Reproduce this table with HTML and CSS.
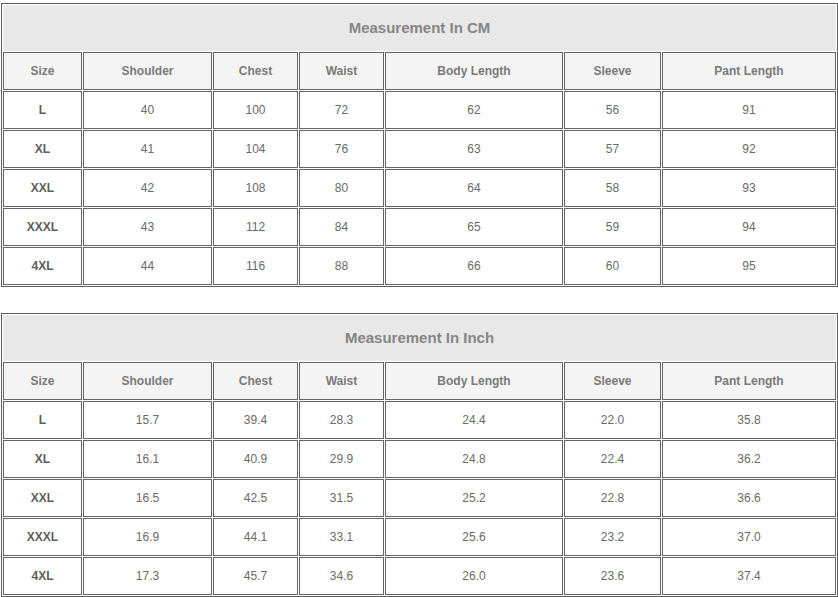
FILE: index.html
```html
<!DOCTYPE html>
<html>
<head>
<meta charset="utf-8">
<link rel="stylesheet" href="styles.css">
</head>
<body>
<div class="page">
<table class="sizes">
  <colgroup>
    <col class="c-size"><col class="c-shoulder"><col class="c-chest"><col class="c-waist"><col class="c-body"><col class="c-sleeve"><col class="c-pant">
  </colgroup>
  <tr><td class="title" colspan="7">Measurement In CM</td></tr>
  <tr class="head"><td>Size</td><td>Shoulder</td><td>Chest</td><td>Waist</td><td>Body Length</td><td>Sleeve</td><td>Pant Length</td></tr>
  <tr><td class="sz">L</td><td>40</td><td>100</td><td>72</td><td>62</td><td>56</td><td>91</td></tr>
  <tr><td class="sz">XL</td><td>41</td><td>104</td><td>76</td><td>63</td><td>57</td><td>92</td></tr>
  <tr><td class="sz">XXL</td><td>42</td><td>108</td><td>80</td><td>64</td><td>58</td><td>93</td></tr>
  <tr><td class="sz">XXXL</td><td>43</td><td>112</td><td>84</td><td>65</td><td>59</td><td>94</td></tr>
  <tr><td class="sz">4XL</td><td>44</td><td>116</td><td>88</td><td>66</td><td>60</td><td>95</td></tr>
</table>
<table class="sizes">
  <colgroup>
    <col class="c-size"><col class="c-shoulder"><col class="c-chest"><col class="c-waist"><col class="c-body"><col class="c-sleeve"><col class="c-pant">
  </colgroup>
  <tr><td class="title" colspan="7">Measurement In Inch</td></tr>
  <tr class="head"><td>Size</td><td>Shoulder</td><td>Chest</td><td>Waist</td><td>Body Length</td><td>Sleeve</td><td>Pant Length</td></tr>
  <tr><td class="sz">L</td><td>15.7</td><td>39.4</td><td>28.3</td><td>24.4</td><td>22.0</td><td>35.8</td></tr>
  <tr><td class="sz">XL</td><td>16.1</td><td>40.9</td><td>29.9</td><td>24.8</td><td>22.4</td><td>36.2</td></tr>
  <tr><td class="sz">XXL</td><td>16.5</td><td>42.5</td><td>31.5</td><td>25.2</td><td>22.8</td><td>36.6</td></tr>
  <tr><td class="sz">XXXL</td><td>16.9</td><td>44.1</td><td>33.1</td><td>25.6</td><td>23.2</td><td>37.0</td></tr>
  <tr><td class="sz">4XL</td><td>17.3</td><td>45.7</td><td>34.6</td><td>26.0</td><td>23.6</td><td>37.4</td></tr>
</table>
</div>
</body>
</html>
```

FILE: styles.css
```css
html, body {
  margin: 0;
  padding: 0;
  background: #ffffff;
}

.page {
  padding: 3px 0 0 1px;
  display: flex;
  flex-direction: column;
  gap: 26px;
  align-items: flex-start;
}

.sizes {
  width: 837px;
  table-layout: fixed;
  border-collapse: separate;
  border-spacing: 1px;
  border: 1px solid #5e5e5e;
  background: #ffffff;
  font-family: "Liberation Sans", Arial, sans-serif;
  font-size: 12px;
  color: #6a6a6a;
}

.c-size { width: 79px; }
.c-shoulder { width: 129px; }
.c-chest { width: 85px; }
.c-waist { width: 85px; }
.c-body { width: 178px; }
.c-sleeve { width: 97px; }
.c-pant { width: 174px; }

.sizes td {
  border: 1px solid #656565;
  padding: 0;
  height: 36px;
  text-align: center;
  vertical-align: middle;
  background: #ffffff;
}

.sizes td.title {
  height: 43px;
  padding-bottom: 1px;
  background: #e8e8e8;
  border-color: #ededed;
  font-size: 15px;
  font-weight: bold;
  color: #858585;
}

.sizes tr.head td {
  background: #f4f4f4;
  font-weight: bold;
  color: #7a7a7a;
}

.sizes td.sz {
  font-weight: bold;
  color: #5e5e5e;
}
```
